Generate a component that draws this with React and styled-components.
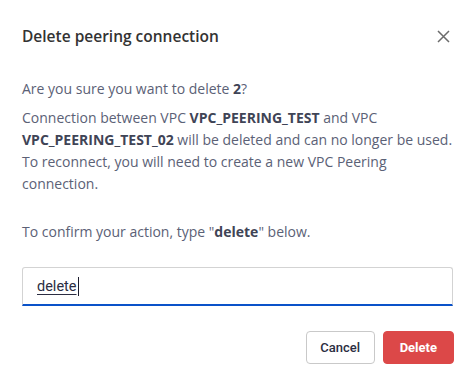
import styled, { createGlobalStyle } from "styled-components";

const GlobalStyle = createGlobalStyle`
  html, body {
    margin: 0;
    padding: 0;
    background: #fff;
  }
`;

const Dialog = styled.div`
  width: 474px;
  height: 389px;
  box-sizing: border-box;
  padding: 25px 20px 0 22px;
  background: #fff;
  font-family: "Open Sans", sans-serif;
`;

const Header = styled.div`
  display: flex;
  align-items: center;
  justify-content: space-between;
  height: 22px;
  margin-bottom: 31px;
`;

const Title = styled.h2`
  margin: 0;
  font-size: 15.5px;
  line-height: 22px;
  font-weight: 600;
  color: #333;
`;

const Close = styled.button`
  display: flex;
  align-items: center;
  justify-content: center;
  width: 20px;
  height: 20px;
  padding: 0;
  margin-right: 1px;
  border: none;
  background: none;
  color: #6b6b6b;
  cursor: pointer;
`;

const Text = styled.p`
  margin: 0 0 ${(p) => p.$gap || 0}px;
  font-size: 14px;
  line-height: 22px;
  color: #5b6176;

  b {
    font-weight: 700;
    color: #3f4456;
  }
`;

const Field = styled.div`
  display: flex;
  align-items: center;
  height: 39px;
  box-sizing: border-box;
  margin: 24px 1px 0 0;
  padding: 0 14px;
  border: 1px solid #d3d3d3;
  border-bottom: 2px solid #0a52c9;
  border-radius: 3px 3px 0 0;
  font-family: Roboto, sans-serif;
  font-size: 14.5px;
  color: #2b2d42;
`;

const Typed = styled.span`
  text-decoration: underline;
  text-underline-offset: 3px;
  text-decoration-thickness: 1px;
`;

const Caret = styled.span`
  display: inline-block;
  width: 1px;
  height: 19px;
  margin-left: 1px;
  background: #1c1c2e;
`;

const Actions = styled.div`
  display: flex;
  justify-content: flex-end;
  gap: 8px;
  margin-top: 25px;
`;

const Button = styled.button`
  height: 33px;
  padding: 0 ${(p) => (p.$danger ? 16 : 13.5)}px;
  border-radius: 4px;
  border: 1px solid ${(p) => (p.$danger ? "#dc4848" : "#c9c9c9")};
  background: ${(p) => (p.$danger ? "#dc4848" : "#fff")};
  color: ${(p) => (p.$danger ? "#fff" : "#2b2d42")};
  font-family: Roboto, sans-serif;
  font-size: 13px;
  font-weight: ${(p) => (p.$danger ? 700 : 500)};
  cursor: pointer;
`;

export default function App() {
  return (
    <>
      <GlobalStyle />
      <Dialog>
        <Header>
          <Title>Delete peering connection</Title>
          <Close aria-label="Close">
            <svg width="13" height="13" viewBox="0 0 13 13">
              <path d="M1 1L12 12M12 1L1 12" stroke="currentColor" strokeWidth="1.5" />
            </svg>
          </Close>
        </Header>
        <Text $gap={7}>
          Are you sure you want to delete <b>2</b>?
        </Text>
        <Text $gap={26}>
          Connection between VPC <b>VPC_PEERING_TEST</b> and VPC{" "}
          <b>VPC_PEERING_TEST_02</b> will be deleted and can no longer be used.
          To reconnect, you will need to create a new VPC Peering connection.
        </Text>
        <Text>
          To confirm your action, type "<b>delete</b>" below.
        </Text>
        <Field>
          <Typed>delete</Typed>
          <Caret />
        </Field>
        <Actions>
          <Button>Cancel</Button>
          <Button $danger>Delete</Button>
        </Actions>
      </Dialog>
    </>
  );
}
